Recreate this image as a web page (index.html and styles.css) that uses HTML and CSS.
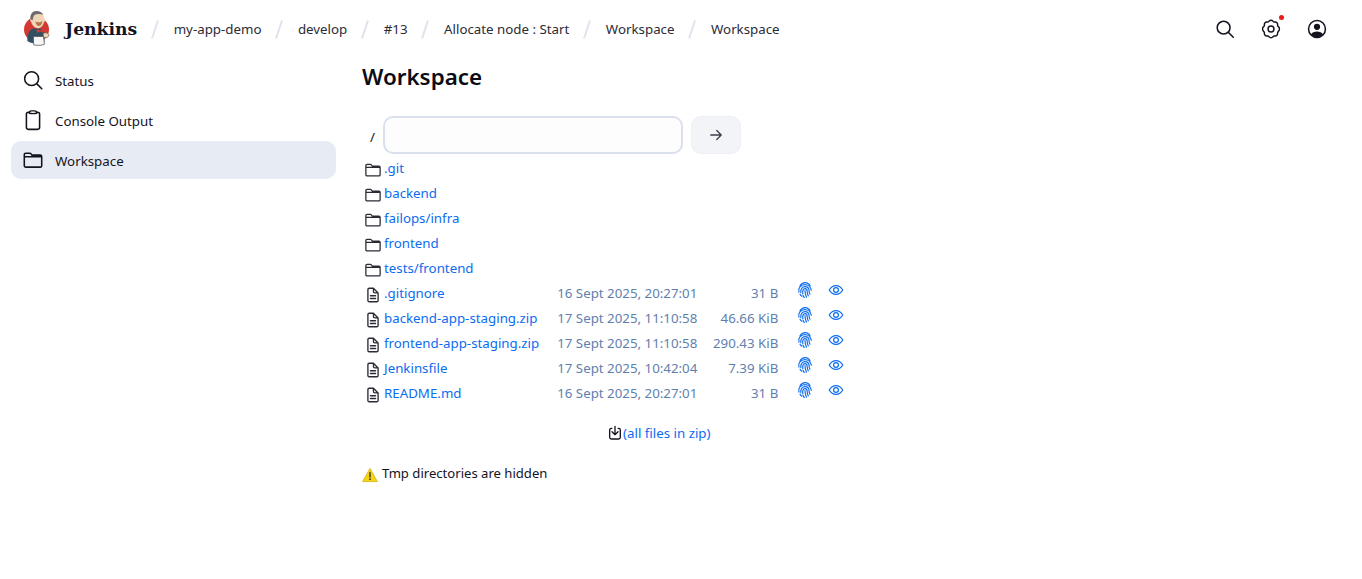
FILE: index.html
```html
<!DOCTYPE html>
<html lang="en">
<head>
    <meta charset="UTF-8">
    <meta name="viewport" content="width=device-width, initial-scale=1.0">
    <title>Workspace [Jenkins]</title>
    <link rel="stylesheet" href="styles.css">
</head>
<body>
    <svg class="sprites" width="0" height="0">
        <symbol id="ico-folder" viewBox="0 0 24 24">
            <path d="M2.5 8.5V6.2C2.5 5.3 3.2 4.6 4.1 4.6H8.6C9.1 4.6 9.5 4.8 9.8 5.2L11 6.7H19.9C20.8 6.7 21.5 7.4 21.5 8.3V18.2C21.5 19.1 20.8 19.8 19.9 19.8H4.1C3.2 19.8 2.5 19.1 2.5 18.2V8.5H21.5" fill="none" stroke="currentColor" stroke-width="1.7" stroke-linejoin="round"/>
        </symbol>
        <symbol id="ico-file" viewBox="0 0 24 24">
            <path d="M12.6 3H7C6 3 5.2 3.8 5.2 4.8V19.2C5.2 20.2 6 21 7 21H17C18 21 18.8 20.2 18.8 19.2V9.2L12.6 3Z M12.6 3.4V7.4C12.6 8.4 13.4 9.2 14.4 9.2H18.4" fill="none" stroke="currentColor" stroke-width="1.8" stroke-linejoin="round"/>
            <path d="M8.6 13H15.4M8.6 16.6H15.4" fill="none" stroke="currentColor" stroke-width="1.8" stroke-linecap="round"/>
        </symbol>
        <symbol id="ico-print" viewBox="2 1 20 22">
            <g fill="none" stroke="currentColor" stroke-width="1.6" stroke-linecap="round">
                <path d="M5 6.5C7 3 10 1.8 12.2 1.8C15 1.8 17.5 3 19 6.5"/>
                <path d="M3.4 11.5C4.2 7.5 8 4.6 12 4.6C16.2 4.6 20 7.8 20.6 12.4"/>
                <path d="M3.6 15C3.4 14 3.6 13.4 3.8 13M6.2 15.5C5.8 9.8 8.6 7.4 12 7.4C15.2 7.4 17.6 9.8 17.6 13.2C17.6 15.2 17.8 16.4 18.8 17.8"/>
                <path d="M9 17.5C8.5 13.5 9 10.2 12 10.2C14.4 10.2 15 12 15 14.2C15 16.8 15.6 18.6 16.6 20"/>
                <path d="M12 12.8C12 16 12.6 19 14 21.8"/>
                <path d="M5.2 17.8C5.8 19 6.6 19.8 7.6 20.6M9.4 19.6C9.8 20.8 10.4 21.6 11 22.4"/>
            </g>
        </symbol>
        <symbol id="ico-eye" viewBox="0 0 24 24">
            <path d="M1.8 12C4.4 7.6 8 5.4 12 5.4C16 5.4 19.6 7.6 22.2 12C19.6 16.4 16 18.6 12 18.6C8 18.6 4.4 16.4 1.8 12Z" fill="none" stroke="currentColor" stroke-width="1.8" stroke-linejoin="round"/>
            <circle cx="12" cy="12" r="3.6" fill="none" stroke="currentColor" stroke-width="1.8"/>
        </symbol>
    </svg>

    <header class="top-bar">
        <a class="brand" href="#">
            <svg class="brand-logo" viewBox="0 0 28 36" width="28" height="36">
                <circle cx="13.5" cy="19.5" r="12.5" fill="#d33833"/>
                <path d="M4.4 31C4 26 5.6 20 10 18.4L17 18.6C20.6 20 21.6 25 21.4 32.6C16 34.4 8.6 34 4.4 31Z" fill="#335061"/>
                <path d="M7.4 9C7 4 9.6 1 13.6 1C18 1 21 4.2 21.4 8.6C22.6 9.4 22.4 11.8 21 12.2C20 15.8 17.8 18.2 15 18.2C11.6 18.2 9 15 8.2 12C7.4 11.4 7 10 7.4 9Z" fill="#f0d6b7"/>
                <path d="M7.4 9C7 4 9.6 1 13.6 1C16.4 1 18.8 2.4 20.2 4.6C16.6 3.6 13.4 3.8 11.4 5C10.6 6.4 10 8 9.6 10.2L8.4 9.8Z" fill="#6d6b6d"/>
                <path d="M12.4 11.6C14 12.8 17.6 12.6 19.4 11C19.2 14 17.6 16 15.4 16C13.8 16 12.8 14 12.4 11.6Z" fill="#b5754f"/>
                <path d="M13.6 19L17 20.4L20 18.6L19.8 22.6L17 21.6L14 23Z" fill="#d33833"/>
                <path d="M10.4 26.4H20.6L21.4 34.4C18 35.6 13.6 35.6 10.6 34.8Z" fill="#f6f6f6" stroke="#49484a" stroke-width=".7"/>
                <path d="M20 23.4C22 22.4 25.4 22.8 26 24.8C26 27 23.4 28.2 20.6 27.6Z" fill="#f0d6b7" stroke="#49484a" stroke-width=".6"/>
            </svg>
            <span class="brand-name">Jenkins</span>
        </a>
        <nav class="crumbs">
            <span class="sep"></span><a href="#">my-app-demo</a>
            <span class="sep"></span><a href="#">develop</a>
            <span class="sep"></span><a href="#">#13</a>
            <span class="sep"></span><a href="#">Allocate node : Start</a>
            <span class="sep"></span><a href="#">Workspace</a>
            <span class="sep"></span><a href="#">Workspace</a>
        </nav>
        <div class="top-actions">
            <a href="#" class="top-icon" title="Search">
                <svg viewBox="0 0 24 24" width="22" height="22"><circle cx="10.5" cy="10.5" r="7" fill="none" stroke="currentColor" stroke-width="1.7"/><path d="M15.8 15.8L21 21" stroke="currentColor" stroke-width="1.7" stroke-linecap="round"/></svg>
            </a>
            <a href="#" class="top-icon" title="Manage Jenkins">
                <svg viewBox="0 0 24 24" width="22" height="22"><path d="M10 3.4C10.9 2.2 13.1 2.2 14 3.4C14.6 4.2 15.5 4.6 16.5 4.4C18 4.2 19.4 5.7 19.2 7.2C19.1 8.2 19.5 9.1 20.3 9.7C21.5 10.6 21.5 13.4 20.3 14.3C19.5 14.9 19.1 15.8 19.2 16.8C19.4 18.3 18 19.8 16.5 19.6C15.5 19.4 14.6 19.8 14 20.6C13.1 21.8 10.9 21.8 10 20.6C9.4 19.8 8.5 19.4 7.5 19.6C6 19.8 4.6 18.3 4.8 16.8C4.9 15.8 4.5 14.9 3.7 14.3C2.5 13.4 2.5 10.6 3.7 9.7C4.5 9.1 4.9 8.2 4.8 7.2C4.6 5.7 6 4.2 7.5 4.4C8.5 4.6 9.4 4.2 10 3.4Z" fill="none" stroke="currentColor" stroke-width="1.6"/><circle cx="12" cy="12" r="3.2" fill="none" stroke="currentColor" stroke-width="1.6"/></svg>
                <span class="badge-dot"></span>
            </a>
            <a href="#" class="top-icon" title="admin">
                <svg viewBox="0 0 24 24" width="22" height="22"><circle cx="12" cy="12" r="9.2" fill="none" stroke="currentColor" stroke-width="1.7"/><circle cx="12" cy="9.6" r="3.4" fill="currentColor"/><path d="M5.4 18C6.8 15.4 9 14.6 12 14.6C15 14.6 17.2 15.4 18.6 18C17 20 14.6 21 12 21C9.4 21 7 20 5.4 18Z" fill="currentColor"/></svg>
            </a>
        </div>
    </header>

    <div class="page">
        <aside class="side-panel">
            <a href="#" class="task">
                <svg class="task-icon" viewBox="0 0 24 24"><circle cx="10.5" cy="10.5" r="7.6" fill="none" stroke="currentColor" stroke-width="1.7"/><path d="M16.2 16.2L21.6 21.6" stroke="currentColor" stroke-width="1.7" stroke-linecap="round"/></svg>
                <span>Status</span>
            </a>
            <a href="#" class="task">
                <svg class="task-icon" viewBox="0 0 24 24"><path d="M8 3.6H7C5.7 3.6 4.8 4.6 4.8 5.8V20C4.8 21.2 5.7 22.2 7 22.2H17C18.3 22.2 19.2 21.2 19.2 20V5.8C19.2 4.6 18.3 3.6 17 3.6H16" fill="none" stroke="currentColor" stroke-width="1.7"/><path d="M8 4.6C8 2.8 9 2 10 2H14C15 2 16 2.8 16 4.6C13.4 5.2 10.6 5.2 8 4.6Z" fill="none" stroke="currentColor" stroke-width="1.5"/></svg>
                <span>Console Output</span>
            </a>
            <a href="#" class="task task-active">
                <svg class="task-icon" viewBox="0 0 24 24"><use href="#ico-folder"/></svg>
                <span>Workspace</span>
            </a>
        </aside>

        <main class="main-panel">
            <h1 class="page-title">Workspace</h1>

            <form class="path-form">
                <span class="path-root">/</span>
                <input class="path-input" type="text">
                <button class="path-go" type="button">
                    <svg viewBox="0 0 24 24" width="18" height="18"><path d="M5 12H19M13 6L19 12L13 18" fill="none" stroke="currentColor" stroke-width="1.7" stroke-linecap="round" stroke-linejoin="round"/></svg>
                </button>
            </form>

            <table class="file-list">
                <tr><td class="c-icon"><svg class="f-icon folder"><use href="#ico-folder"/></svg></td><td><a href="#">.git</a></td><td></td><td></td><td></td><td></td></tr>
                <tr><td class="c-icon"><svg class="f-icon folder"><use href="#ico-folder"/></svg></td><td><a href="#">backend</a></td><td></td><td></td><td></td><td></td></tr>
                <tr><td class="c-icon"><svg class="f-icon folder"><use href="#ico-folder"/></svg></td><td><a href="#">failops/infra</a></td><td></td><td></td><td></td><td></td></tr>
                <tr><td class="c-icon"><svg class="f-icon folder"><use href="#ico-folder"/></svg></td><td><a href="#">frontend</a></td><td></td><td></td><td></td><td></td></tr>
                <tr><td class="c-icon"><svg class="f-icon folder"><use href="#ico-folder"/></svg></td><td><a href="#">tests/frontend</a></td><td></td><td></td><td></td><td></td></tr>
                <tr><td class="c-icon"><svg class="f-icon"><use href="#ico-file"/></svg></td><td><a href="#">.gitignore</a></td><td class="c-date">16 Sept 2025, 20:27:01</td><td class="c-size">31 B</td><td class="c-act"><svg class="a-icon"><use href="#ico-print"/></svg></td><td class="c-act"><svg class="a-icon"><use href="#ico-eye"/></svg></td></tr>
                <tr><td class="c-icon"><svg class="f-icon"><use href="#ico-file"/></svg></td><td><a href="#">backend-app-staging.zip</a></td><td class="c-date">17 Sept 2025, 11:10:58</td><td class="c-size">46.66 KiB</td><td class="c-act"><svg class="a-icon"><use href="#ico-print"/></svg></td><td class="c-act"><svg class="a-icon"><use href="#ico-eye"/></svg></td></tr>
                <tr><td class="c-icon"><svg class="f-icon"><use href="#ico-file"/></svg></td><td><a href="#">frontend-app-staging.zip</a></td><td class="c-date">17 Sept 2025, 11:10:58</td><td class="c-size">290.43 KiB</td><td class="c-act"><svg class="a-icon"><use href="#ico-print"/></svg></td><td class="c-act"><svg class="a-icon"><use href="#ico-eye"/></svg></td></tr>
                <tr><td class="c-icon"><svg class="f-icon"><use href="#ico-file"/></svg></td><td><a href="#">Jenkinsfile</a></td><td class="c-date">17 Sept 2025, 10:42:04</td><td class="c-size">7.39 KiB</td><td class="c-act"><svg class="a-icon"><use href="#ico-print"/></svg></td><td class="c-act"><svg class="a-icon"><use href="#ico-eye"/></svg></td></tr>
                <tr><td class="c-icon"><svg class="f-icon"><use href="#ico-file"/></svg></td><td><a href="#">README.md</a></td><td class="c-date">16 Sept 2025, 20:27:01</td><td class="c-size">31 B</td><td class="c-act"><svg class="a-icon"><use href="#ico-print"/></svg></td><td class="c-act"><svg class="a-icon"><use href="#ico-eye"/></svg></td></tr>
                <tr><td class="zip-row" colspan="6">
                    <svg class="zip-icon" viewBox="0 0 24 24"><path d="M8 5H6.5C5.1 5 4 6.1 4 7.5V18.5C4 19.9 5.1 21 6.5 21H17.5C18.9 21 20 19.9 20 18.5V7.5C20 6.1 18.9 5 17.5 5H16" fill="none" stroke="currentColor" stroke-width="2"/><path d="M12 2V14M7.5 10L12 14.5L16.5 10" fill="none" stroke="currentColor" stroke-width="2" stroke-linecap="round" stroke-linejoin="round"/></svg><a href="#">(all files in zip)</a>
                </td></tr>
            </table>

            <div class="tmp-note">
                <svg class="warn-icon" viewBox="0 0 16 16"><path d="M8 1.4L15.4 14.6H.6Z" fill="#f5d316" stroke="#d3b40e" stroke-width=".8" stroke-linejoin="round"/><path d="M8 5.6V10" stroke="#3a3a1a" stroke-width="1.4" stroke-linecap="round"/><circle cx="8" cy="12.2" r=".9" fill="#3a3a1a"/></svg>
                <span>Tmp directories are hidden</span>
            </div>
        </main>
    </div>
</body>
</html>
```

FILE: styles.css
```css
body {
    font-family: "Noto Sans", "Open Sans", sans-serif;
    font-size: 13.3px;
    line-height: 20px;
    margin: 0;
    padding: 0;
    background-color: #ffffff;
    color: #14141f;
}
a {
    text-decoration: none;
    color: inherit;
}
.sprites {
    display: block;
    height: 0;
}

/* top bar */
.top-bar {
    display: flex;
    align-items: center;
    height: 58px;
    padding: 0 34px 0 23px;
}
.brand {
    display: flex;
    align-items: center;
    gap: 14px;
}
.brand-logo {
    display: block;
    margin-bottom: 2px;
}
.brand-name {
    font-family: "DejaVu Serif", Georgia, serif;
    font-size: 17.2px;
    font-weight: bold;
}
.crumbs {
    display: flex;
    align-items: center;
    color: #2b2b36;
}
.sep {
    display: block;
    width: 2px;
    height: 19px;
    margin: 0 18px 0 16.5px;
    background: #dfe3ec;
    transform: rotate(18deg);
}
.top-actions {
    display: flex;
    gap: 24px;
    margin-left: auto;
}
.top-icon {
    position: relative;
    display: block;
    width: 22px;
    height: 22px;
}
.badge-dot {
    position: absolute;
    top: -3px;
    right: -2px;
    width: 5px;
    height: 5px;
    border-radius: 50%;
    background: #e81a1a;
}

/* layout */
.page {
    display: flex;
}
.side-panel {
    width: 325px;
    margin-left: 11px;
    margin-top: 3px;
    display: flex;
    flex-direction: column;
    gap: 2px;
}
.task {
    display: flex;
    align-items: center;
    gap: 11px;
    height: 38px;
    padding-left: 11px;
    border-radius: 10px;
}
.task span {
    padding-top: 2px;
}
.task-icon {
    width: 22px;
    height: 22px;
    flex: none;
}
.task-active {
    background: #e7ebf3;
}
.main-panel {
    margin-left: 26px;
    flex: 1;
}
.page-title {
    font-size: 22.4px;
    line-height: 30px;
    font-weight: 600;
    margin: 4px 0 23px;
    color: #0c0c14;
}

/* path form */
.path-form {
    display: flex;
    align-items: center;
    gap: 8px;
    height: 40px;
    padding-left: 8px;
}
.path-root {
    width: 13px;
    margin-right: -8px;
    padding-top: 4px;
}
.path-input {
    width: 300px;
    height: 38px;
    box-sizing: border-box;
    border: 2px solid #dbe0ee;
    border-radius: 10px;
    background: #fdfdfe;
}
.path-go {
    width: 50px;
    height: 38px;
    border: 1px solid #edf0f5;
    border-radius: 10px;
    background: #f2f4f8;
    color: #3d3d4a;
    padding: 0;
    display: flex;
    align-items: center;
    justify-content: center;
}

/* file table */
.file-list {
    border-collapse: collapse;
}
.file-list td {
    height: 25px;
    padding: 0;
    white-space: nowrap;
}
.file-list a {
    color: #0b6cf0;
}
.c-icon {
    width: 22px;
    padding-left: 2px !important;
    box-sizing: border-box;
    line-height: 0;
    color: #2b2b36;
}
.f-icon {
    width: 18px;
    height: 18px;
    display: block;
    margin-top: 4px;
}
.f-icon.folder {
    margin-left: 0;
}
.c-date, .c-size {
    color: #5f7fae;
}
.c-date {
    padding-left: 18px !important;
}
.c-size {
    text-align: right;
    min-width: 81px;
}
.c-act {
    color: #0b6cf0;
    padding-left: 19px !important;
    line-height: 0;
}
.c-act + .c-act {
    padding-left: 15px !important;
}
.a-icon {
    width: 16px;
    height: 16px;
    display: block;
    margin-top: -6px;
}
.zip-row {
    height: 55px !important;
    padding-left: 245px !important;
}
.zip-icon {
    width: 16px;
    height: 16px;
    vertical-align: -3px;
}
.tmp-note {
    display: flex;
    align-items: center;
    gap: 4px;
    margin-top: 3px;
    font-size: 13.1px;
}
.warn-icon {
    width: 16px;
    height: 16px;
    flex: none;
    margin-top: 3px;
}
```
